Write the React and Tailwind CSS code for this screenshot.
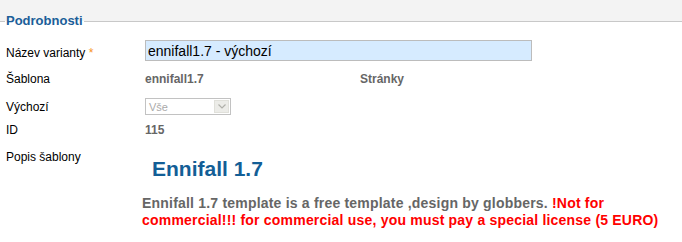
export default function App() {
    return (
        <div className="w-full h-[242px] bg-[#f3f3f3] pt-[13px] font-['Liberation_Sans',Arial,sans-serif] overflow-hidden">
            <fieldset className="bg-white border-t border-[#c8c8c8] h-[229px]">
                <legend className="ml-[5px] px-px text-[13px] leading-[16px] font-bold text-[#1b5e99]">
                    Podrobnosti
                </legend>

                <div className="pt-[11px] pl-[6px] text-[12px] leading-[14px] text-black">
                    {/* Název varianty */}
                    <div className="flex items-center h-[21px]">
                        <div className="w-[139px] pt-[4px]">
                            Název varianty <span className="text-[#f7941d]">*</span>
                        </div>
                        <input
                            readOnly
                            value="ennifall1.7 - výchozí"
                            className="w-[387px] h-[21px] border border-[#bcbcbc] bg-[#d6ebff] px-[2px] text-[14px] text-black outline-none font-['Liberation_Sans',Arial,sans-serif]"
                        />
                    </div>

                    {/* Šablona */}
                    <div className="flex items-center h-[14px] mt-[11px]">
                        <div className="w-[139px]">Šablona</div>
                        <div className="w-[215px] font-bold text-[#666]">ennifall1.7</div>
                        <div className="font-bold text-[#666]">Stránky</div>
                    </div>

                    {/* Výchozí */}
                    <div className="flex items-center h-[17px] mt-[12px]">
                        <div className="w-[139px]">Výchozí</div>
                        <div className="w-[86px] h-[17px] border border-[#c2c2c2] bg-white flex items-center justify-between pl-[3px] pr-px">
                            <span className="text-[11px] text-[#aaa]">Vše</span>
                            <span className="w-[15px] h-[13px] bg-[#ecece8] border border-[#e0e0da] flex items-center justify-center">
                                <svg width="8" height="5" viewBox="0 0 8 5" fill="none">
                                    <path d="M0.5 0.5 L4 4 L7.5 0.5" stroke="#b0b0aa" strokeWidth="1.2" />
                                </svg>
                            </span>
                        </div>
                    </div>

                    {/* ID */}
                    <div className="flex items-center h-[14px] mt-[8px]">
                        <div className="w-[139px]">ID</div>
                        <div className="font-bold text-[#666]">115</div>
                    </div>

                    {/* Popis šablony */}
                    <div className="flex mt-[13px]">
                        <div className="w-[139px] h-[14px]">Popis šablony</div>
                        <div className="flex-1">
                            <h2 className="ml-[7px] mt-[7px] text-[21px] leading-[24px] font-bold text-[#135e96]">
                                Ennifall 1.7
                            </h2>
                            <p className="-ml-[3px] mt-[14px] text-[14px] leading-[17px] tracking-[0.2px] font-bold text-[#666]">
                                Ennifall 1.7 template is a free template ,design by globbers.{" "}
                                <span className="text-[#ff0000]">
                                    !Not for commercial!!! for commercial use, you must pay a special license (5 EURO)
                                </span>
                            </p>
                        </div>
                    </div>
                </div>
            </fieldset>
        </div>
    );
}
